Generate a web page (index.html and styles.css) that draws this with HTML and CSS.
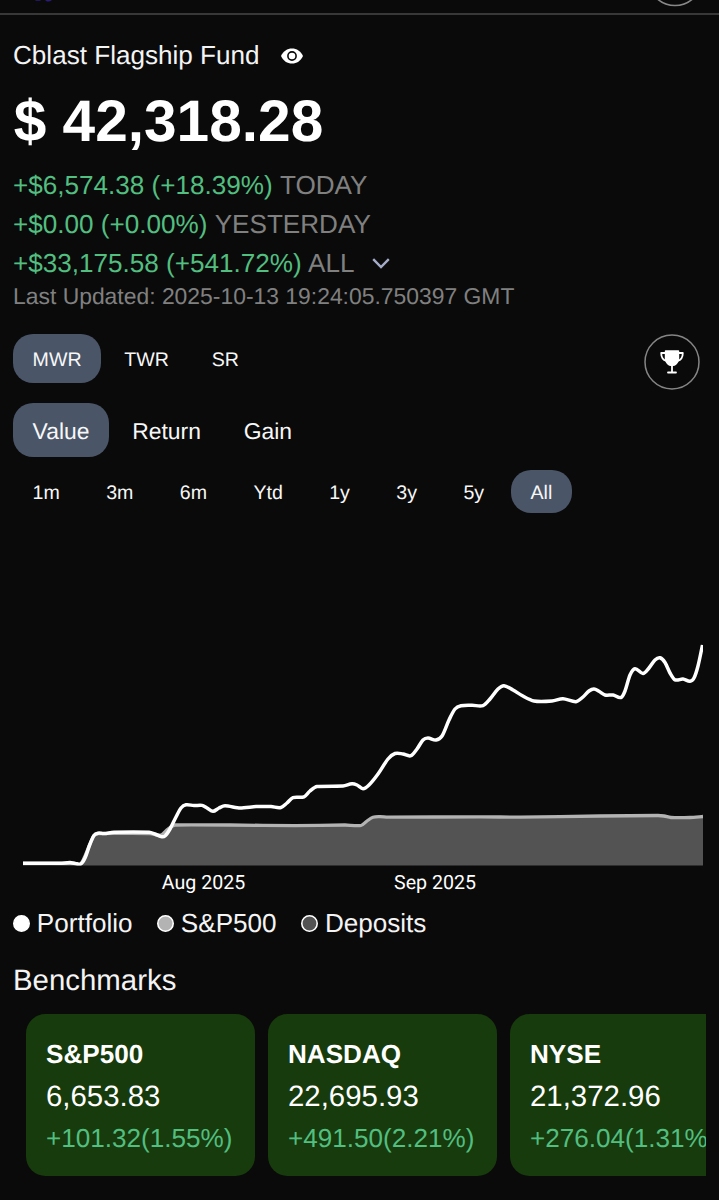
FILE: index.html
```
<!DOCTYPE html>
<html lang="en">
<head>
<meta charset="utf-8">
<title>Cblast Flagship Fund</title>
<link rel="stylesheet" href="styles.css">
</head>
<body>
<header class="topbar">
  <svg class="topbar-art" width="719" height="13" viewBox="0 0 719 13">
    <path d="M35 0h6l-1 .8h-4zM45 0h7q-2 2-5 1.500z" fill="#2b1c78"/>
    <circle cx="675" cy="-21.500" r="27" fill="none" stroke="#888" stroke-width="1.600"/>
  </svg>
</header>
<main class="page">
  <div class="fund">
    <span>Cblast Flagship Fund</span>
    <svg class="eye" width="22" height="16" viewBox="0 0 22 16">
      <path d="M0 8C2.300 3 6.300.5 11 .5S19.700 3 22 8c-2.300 5-6.300 7.500-11 7.500S2.300 13 0 8z" fill="#fff"/>
      <circle cx="11" cy="8" r="4.100" fill="none" stroke="#0a0a0a" stroke-width="1.600"/>
    </svg>
  </div>
  <div class="amount">$ 42,318.28</div>
  <div class="change"><span class="gain">+$6,574.38 (+18.39%)</span><span class="period">TODAY</span></div>
  <div class="change"><span class="gain">+$0.00 (+0.00%)</span><span class="period">YESTERDAY</span></div>
  <div class="change change-all"><span class="gain">+$33,175.58 (+541.72%)</span><span class="period">ALL</span>
    <svg class="chevron" width="18" height="11" viewBox="0 0 18 11"><path d="M1.200 1.200 9 9l7.800-7.800" fill="none" stroke="#a5acc9" stroke-width="2.400"/></svg>
  </div>
  <div class="updated">Last Updated: 2025-10-13 19:24:05.750397 GMT</div>

  <div class="metric-row">
    <div class="tabs metric"><span class="tab active">MWR</span><span class="tab">TWR</span><span class="tab">SR</span></div>
    <div class="trophy">
      <svg width="56" height="56" viewBox="0 0 56 56">
        <circle cx="28" cy="28" r="27" fill="none" stroke="#858585" stroke-width="1.500"/>
        <g transform="translate(16 15.700)">
          <path d="M4.800 1.200Q4.800.5 5.600.5h12.800q.8 0 .8.700V8.500c0 4.700-3.500 8-7.200 8s-7.200-3.300-7.200-8z" fill="#fff"/>
          <path d="M5.500 3.300H1.200c0 4.500 1.700 7 5.300 8M18.500 3.300h4.300c0 4.500-1.700 7-5.300 8M12 15v7.500M8 22.800h8" fill="none" stroke="#fff" stroke-width="1.800" stroke-linecap="round" stroke-linejoin="round"/>
        </g>
      </svg>
    </div>
  </div>
  <div class="tabs mode"><span class="tab active">Value</span><span class="tab">Return</span><span class="tab">Gain</span></div>
  <div class="tabs range"><span class="tab">1m</span><span class="tab">3m</span><span class="tab">6m</span><span class="tab">Ytd</span><span class="tab">1y</span><span class="tab">3y</span><span class="tab">5y</span><span class="tab active">All</span></div>

  <svg class="chart" width="706" height="390" viewBox="0 513 706 390">
    <defs><clipPath id="plot"><rect x="23" y="600" width="680" height="265.500"/></clipPath></defs>
    <g clip-path="url(#plot)">
      <path id="deposits" fill="#535353"/>
      <path id="index" fill="none" stroke="#b3b3b3" stroke-width="3.300"/>
      <path id="portfolio" fill="none" stroke="#fff" stroke-width="3.500"/>
    </g>
    <text class="axis" x="203.500" y="889">Aug 2025</text>
    <text class="axis" x="435" y="889">Sep 2025</text>
  </svg>

  <div class="legend">
    <span class="key"><svg class="dot" width="17" height="17" viewBox="0 0 17 17"><circle cx="8.500" cy="8.500" r="7.700" fill="#fff"/></svg>Portfolio</span>
    <span class="key"><svg class="dot" width="17" height="17" viewBox="0 0 17 17"><circle cx="8.500" cy="8.500" r="7.700" fill="#b3b3b3"/></svg>S&amp;P500</span>
    <span class="key"><svg class="dot" width="17" height="17" viewBox="0 0 17 17"><circle cx="8.500" cy="8.500" r="7.700" fill="#535353"/></svg>Deposits</span>
  </div>

  <h2 class="heading">Benchmarks</h2>
  <div class="cards">
    <div class="card"><b>S&amp;P500</b><span class="quote">6,653.83</span><span class="gain">+101.32(1.55%)</span></div>
    <div class="card"><b>NASDAQ</b><span class="quote">22,695.93</span><span class="gain">+491.50(2.21%)</span></div>
    <div class="card"><b>NYSE</b><span class="quote">21,372.96</span><span class="gain">+276.04(1.31%)</span></div>
  </div>
</main>
<script src="chart.js"></script>
</body>
</html>
```
FILE: styles.css
```
* { box-sizing: border-box; }
body {
  margin: 0;
  width: 719px;
  height: 1200px;
  overflow: hidden;
  background: #0a0a0a;
  color: #fff;
  font-family: "Liberation Sans", Arial, sans-serif;
  font-size: 26.1px;
  text-rendering: geometricPrecision;
}
svg { display: block; flex: none; }
.topbar { height: 15px; border-bottom: 2px solid #383838; overflow: hidden; }
.page { padding: 20px 13px 0; white-space: nowrap; }
.fund { display: flex; align-items: center; height: 39px; padding-top: 1px; color: #f4f4f4; }
.eye { margin: 2px 0 0 21px; }
.amount { height: 91.700px; padding: 1.500px 0 0 .7px; line-height: 91.700px; font-size: 58.6px; font-weight: 700; }
.change { display: flex; align-items: center; height: 39.300px; line-height: 39.300px; }
.gain { color: #52be80; }
.period { margin-left: 7.300px; color: #808080; }
.change-all .period { margin-left: 6.300px; }
.chevron { margin-left: 18px; }
.updated { height: 26px; line-height: 24.500px; font-size: 22.900px; color: #808080; }
.metric-row { display: flex; justify-content: space-between; align-items: flex-start; height: 69px; margin-top: 24.800px; }
.tabs { display: flex; gap: 3.600px; font-size: 19.600px; }
.tab { padding: 1.500px 19.600px 0; border-radius: 20px; color: #f7f7f7; }
.active { background: #4a5568; }
.metric .tab { height: 49px; line-height: 49px; }
.mode { font-size: 22.900px; }
.mode .tab { height: 53.700px; line-height: 53.700px; }
.range { gap: 7.200px; margin-top: 13.200px; }
.range .tab { height: 42.500px; line-height: 42.500px; }
.trophy { width: 56px; height: 56px; margin-right: 6px; }
.chart { margin-left: -13px; }
.axis { fill: #fff; font-family: Roboto, sans-serif; font-size: 19.600px; text-anchor: middle; }
.legend { display: flex; gap: 24.500px; height: 42px; align-items: center; color: #f4f4f4; }
.key { display: flex; align-items: center; gap: 6.800px; }
.dot { stroke: #fff; stroke-width: 1.600px; }
.heading { height: 69.500px; margin: 0; line-height: 71.500px; font-size: 29.400px; font-weight: 400; color: #f4f4f4; }
.cards { display: flex; gap: 13px; padding-left: 13px; overflow: hidden; }
.card { display: flex; flex: none; flex-direction: column; width: 229px; height: 161.700px; padding: 20.600px 20px 16px; border-radius: 19.600px; background: #173b0c; line-height: 39.200px; }
.quote { font-size: 29.400px; line-height: 45px; }
```
FILE: chart.js
```
const portfolio = [[23,863.3],[60,863.3],[70,862.5],[75,863.5],[81,863.7],[85,858],[90,844],[94,835.5],[98,833.2],[104,833.5],[114,832.3],[149,832.3],[155,834],[161,836.6],[165,836],[170,829],[176,817],[181,808],[186,804.8],[194,805.6],[202,805.4],[207,808],[213,811.3],[219,808],[225,805.8],[240,808],[256,806.6],[271,806.6],[281,807.5],[287,803],[293,797.7],[304,796.8],[310,791],[317,786.5],[343,786],[352,783.7],[357,785],[363,788.7],[369,785],[378,774],[388,759],[395,753.5],[403,754],[411,755.7],[417,749],[423,740],[428,738],[436,740],[442,736],[449,720],[455,709],[461,705.7],[472,705.2],[483,705.6],[490,699],[498,689],[504,685.7],[513,690],[522,695.5],[534,701],[552,701],[563,698.7],[576,701.7],[583,697],[589,691],[594,689],[599,691.3],[605,695],[613,695],[621,697.5],[625,691],[630,675],[635,668.7],[643,673.5],[649,668],[655,660],[660,657.8],[665,662.5],[670,673],[675,679.8],[683,679],[690,681.3],[694,678],[698,666],[702.5,645]];
const index = [[23,863.3],[75,863.5],[81,863.7],[90,844],[94,835.5],[98,833.7],[114,833.3],[150,833.5],[161,835],[168,829],[175,825],[230,825],[295,825.7],[345,825],[361,825.5],[367,821],[373,817.3],[380,816.7],[388,817.2],[480,816.8],[520,817.2],[600,816],[658,815.5],[664,816],[671,817.5],[690,817.5],[703,816.5]];

// Smooth cubic interpolation through the samples, tangents by central difference.
// Tangents are limited so that long flat stretches do not overshoot.
function curve(points) {
  const slope = (i, j) => (points[j][1] - points[i][1]) / (points[j][0] - points[i][0]);
  const last = points.length - 1;
  const tangent = points.map((_, i) => slope(Math.max(i - 1, 0), Math.min(i + 1, last)));
  let d = `M${points[0]}`;
  for (let i = 0; i < last; i++) {
    const [x, y] = points[i], [u, v] = points[i + 1];
    const h = Math.min((u - x) / 3, 3.5);
    d += `C${x + h},${y + h * tangent[i]} ${u - h},${v - h * tangent[i + 1]} ${u},${v}`;
  }
  return d;
}

document.getElementById('portfolio').setAttribute('d', curve(portfolio));
document.getElementById('index').setAttribute('d', curve(index));
document.getElementById('deposits').setAttribute('d', curve(index) + 'V866H23Z');
```
